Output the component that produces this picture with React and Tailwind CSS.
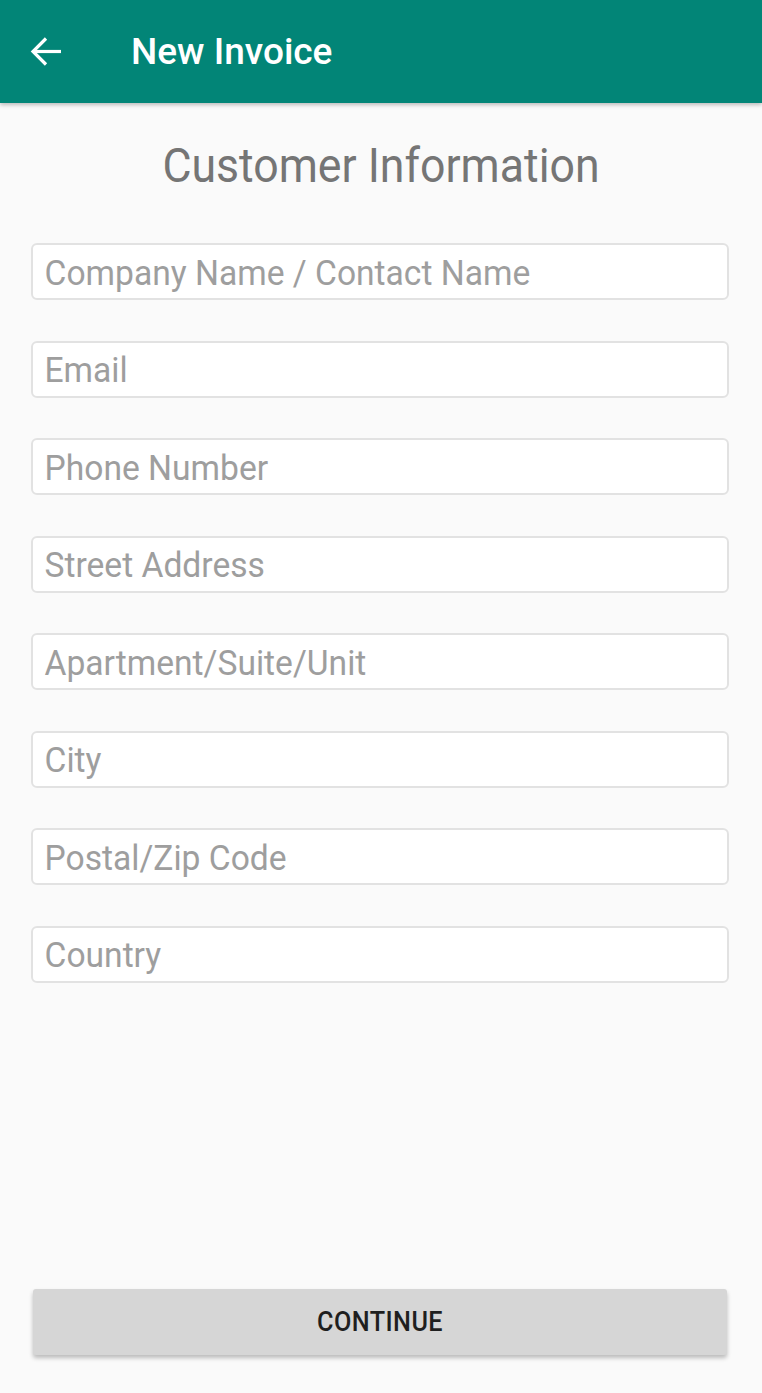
import React from "react";

const fields = [
  "Company Name / Contact Name",
  "Email",
  "Phone Number",
  "Street Address",
  "Apartment/Suite/Unit",
  "City",
  "Postal/Zip Code",
  "Country",
];

// thin material-style back arrow
const BackArrow = () => (
  <svg width="32" height="31" viewBox="0 0 32 31" fill="none" stroke="white" strokeWidth="3.2">
    <path d="M31 15.5H3" />
    <path d="M16 2.5L3 15.5l13 13" />
  </svg>
);

export default function App() {
  return (
    <div
      className="min-h-screen flex flex-col bg-[#fafafa]"
      style={{ fontFamily: "Roboto, 'Liberation Sans', sans-serif" }}
    >
      {/* Toolbar */}
      <header className="h-[103px] bg-[#028577] flex items-center shadow-[0_2px_4px_rgba(0,0,0,0.25)] relative z-10">
        <div className="ml-[30px] w-[32px] flex items-center">
          <BackArrow />
        </div>
        <h1 className="ml-[69px] text-[37px] leading-[38px] font-medium text-white whitespace-nowrap">
          New Invoice
        </h1>
      </header>

      <h2 className="mt-[39px] text-center text-[48px] leading-[48px] text-[#757575] scale-x-[0.93] whitespace-nowrap">
        Customer Information
      </h2>

      {/* Form */}
      <div className="mt-[53px] pl-[31px] pr-[33px] flex flex-col gap-[40.5px]">
        {fields.map((f) => (
          <div
            key={f}
            className="h-[57px] bg-white border-2 border-[#e2e2e2] rounded-[6px] flex items-center overflow-hidden"
          >
            <input
              placeholder={f}
              className="w-[104.2%] shrink-0 origin-left scale-x-[0.96] bg-transparent pl-[12px] pt-[5px] text-[35px] text-[#333] placeholder:text-[#9e9e9e] outline-none"
            />
          </div>
        ))}
      </div>

      <div className="mt-auto mb-[38px] pl-[33px] pr-[35px]">
        <button className="w-full h-[66px] bg-[#d6d6d6] rounded-[3px] shadow-[0_3px_4px_rgba(0,0,0,0.25)] flex items-center justify-center">
          <span className="text-[28px] font-medium text-[#1f1f1f] scale-x-[0.9] tracking-[0.5px]">
            CONTINUE
          </span>
        </button>
      </div>
    </div>
  );
}
